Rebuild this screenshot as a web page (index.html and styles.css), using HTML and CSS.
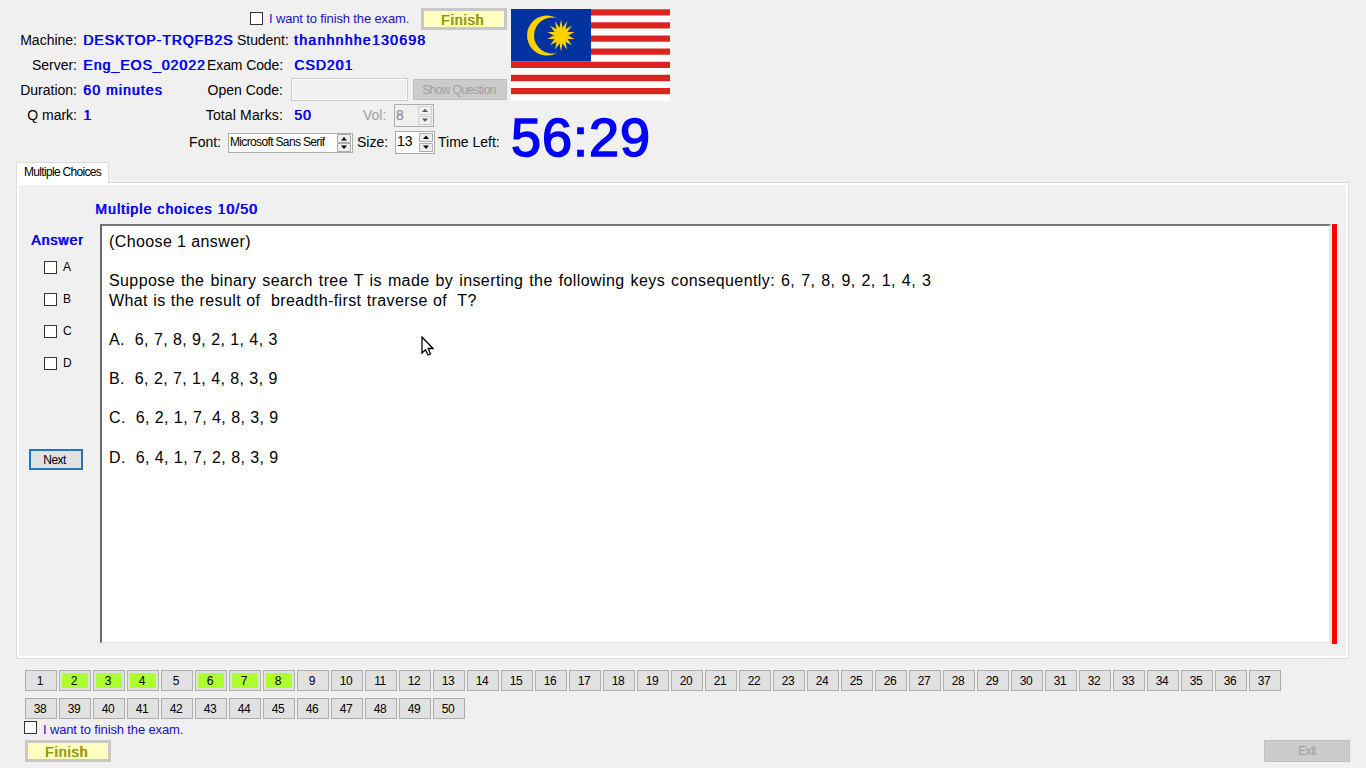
FILE: index.html
```html
<!DOCTYPE html>
<html lang="en">
<head>
<meta charset="utf-8">
<title>Exam</title>
<link rel="stylesheet" href="styles.css">
</head>
<body>
<header class="top">
  <div class="info">
    <div class="row r-finish">
      <span class="box"></span><span class="confirm">I want to finish the exam.</span>
      <button class="finish">Finish</button>
    </div>
    <div class="row first"><span class="c1">Machine:</span><span class="val wide v-machine">DESKTOP-TRQFB2S</span><span class="c2s">Student:</span><span class="val v-student">thanhnhhe130698</span></div>
    <div class="row"><span class="c1">Server:</span><span class="val mid v-server">Eng_EOS_02022</span><span class="c2 code">Exam Code:</span><span class="val v3 v-code">CSD201</span></div>
    <div class="row"><span class="c1">Duration:</span><span class="val mid v-dur">60 minutes</span><span class="c2">Open Code:</span><span class="field"></span><button class="grey show">Show Question</button></div>
    <div class="row"><span class="c1">Q mark:</span><span class="val mid v-mark">1</span><span class="c2 total">Total Marks:</span><span class="val v3 v-total">50</span><span class="vol">Vol:</span>
      <span class="spin off"><span class="num">8</span><svg class="arrows" width="14" height="19" viewBox="0 0 14 19"><path d="M.5.5h13v8H.5zM.5 10.500h13v8H.5z" fill="#f0f0f0" stroke="#d0d0d0"/><path d="M4 6h6L7 2.800zM4 12.500h6L7 15.700z" fill="#555"/></svg></span>
    </div>
    <div class="row r-font"><span class="lbl-font">Font:</span>
      <span class="spin fontbox"><span class="fname">Microsoft Sans Serif</span><svg class="arrows" width="14" height="18" viewBox="0 0 14 18"><path d="M.5.5h13v8H.5zM.5 9.500h13v8H.5z" fill="#eee" stroke="#acacac"/><path d="M4 6.500h6L7 3zM4 11.500h6l-3 3.500z" fill="#000"/></svg></span>
      <span class="lbl-size">Size:</span>
      <span class="spin size"><span class="num">13</span><svg class="arrows" width="14" height="19" viewBox="0 0 14 19"><path d="M.5.5h13v8H.5zM.5 10.500h13v8H.5z" fill="#eee" stroke="#acacac"/><path d="M4 6h6L7 2.500zM4 12.500h6l-3 3.500z" fill="#000"/></svg></span>
      <span class="lbl-time">Time Left:</span>
    </div>
  </div>
  <div class="side">
    <svg class="flag" width="159" height="92" viewBox="0 0 159 92">
      <defs><path id="ray" d="M0-15.800L2-7H-2z"/></defs>
      <rect width="159" height="92" fill="#fff"/>
      <path d="M0 3.290H159M0 16.430H159M0 29.570H159M0 42.710H159M0 55.850H159M0 69H159M0 82.150H159" stroke="#dc241f" stroke-width="6.300"/>
      <rect width="80" height="52.600" fill="#0032a0"/>
      <path d="M46.300 9.300A20 20 0 1 0 46.300 43.700A18 18 0 1 1 46.300 9.300z" fill="#ffd100"/>
      <g transform="translate(50 26.500) scale(.88 1)" fill="#ffd100">
        <circle r="7.800"/>
        <use href="#ray"/><use href="#ray" transform="rotate(25.714)"/><use href="#ray" transform="rotate(51.429)"/><use href="#ray" transform="rotate(77.143)"/><use href="#ray" transform="rotate(102.857)"/><use href="#ray" transform="rotate(128.571)"/><use href="#ray" transform="rotate(154.286)"/><use href="#ray" transform="rotate(180)"/><use href="#ray" transform="rotate(205.714)"/><use href="#ray" transform="rotate(231.429)"/><use href="#ray" transform="rotate(257.143)"/><use href="#ray" transform="rotate(282.857)"/><use href="#ray" transform="rotate(308.571)"/><use href="#ray" transform="rotate(334.286)"/>
      </g>
    </svg>
    <div class="timer">56:29</div>
  </div>
</header>
<div class="tab"><span>Multiple Choices</span></div>
<main class="panel">
  <h1 class="title">Multiple choices 10/50</h1>
  <div class="work">
    <div class="answers">
      <div class="ahead">Answer</div>
      <label class="opt"><span class="box"></span>A</label>
      <label class="opt"><span class="box"></span>B</label>
      <label class="opt"><span class="box"></span>C</label>
      <label class="opt"><span class="box"></span>D</label>
      <button class="next">Next</button>
    </div>
    <div class="paper">
      <p>(Choose 1 answer)</p>
      <p>&nbsp;</p>
      <p class="q2">Suppose the binary search tree T is made by inserting the following keys consequently: 6, 7, 8, 9, 2, 1, 4, 3</p>
      <p class="q3">What is the result of  breadth-first traverse of  T?</p>
      <p>&nbsp;</p>
      <p class="qa">A.  6, 7, 8, 9, 2, 1, 4, 3</p>
      <p>&nbsp;</p>
      <p class="qa">B.  6, 2, 7, 1, 4, 8, 3, 9</p>
      <p>&nbsp;</p>
      <p class="qa">C.  6, 2, 1, 7, 4, 8, 3, 9</p>
      <p>&nbsp;</p>
      <p class="qa">D.  6, 4, 1, 7, 2, 8, 3, 9</p>
    </div>
    <div class="redbar"></div>
  </div>
</main>
<nav class="nums">
<button>1</button><button class="done">2</button><button class="done">3</button><button class="done">4</button><button>5</button><button class="done">6</button><button class="done">7</button><button class="done">8</button><button>9</button><button>10</button><button>11</button><button>12</button><button>13</button><button>14</button><button>15</button><button>16</button><button>17</button><button>18</button><button>19</button><button>20</button><button>21</button><button>22</button><button>23</button><button>24</button><button>25</button><button>26</button><button>27</button><button>28</button><button>29</button><button>30</button><button>31</button><button>32</button><button>33</button><button>34</button><button>35</button><button>36</button><button>37</button><button>38</button><button>39</button><button>40</button><button>41</button><button>42</button><button>43</button><button>44</button><button>45</button><button>46</button><button>47</button><button>48</button><button>49</button><button>50</button>
</nav>
<div class="row r-low"><span class="box"></span><span class="confirm">I want to finish the exam.</span></div>
<footer class="foot"><button class="finish">Finish</button><button class="grey exit">Exit</button></footer>
<svg class="cursor" width="13" height="20" viewBox="0 0 13 20"><path d="M1 1V17L4.500 13.800L7 19L9.500 18L7.200 12.500H12z" fill="#fff" stroke="#000" stroke-width="1.300"/></svg>
</body>
</html>
```
FILE: styles.css
```css
* { box-sizing: border-box; }
body { margin: 0; width: 1366px; height: 768px; overflow: hidden; background: #f0f0f0; font: 14px/16px "Liberation Sans", Arial, sans-serif; color: #000; }
button { margin: 0; padding: 0; font-family: inherit; border-radius: 0; white-space: nowrap; }
.top { display: flex; height: 162px; padding-top: 8px; }
.info { width: 511px; flex: none; }
.row { display: flex; align-items: center; height: 25px; white-space: nowrap; }
.r-finish { height: 20px; padding-left: 250px; }
.first { margin-top: -1px; }
.box { flex: none; width: 13px; height: 13px; border: 1px solid #333; background: #fff; }
.confirm { margin-left: 6px; width: 152px; font-size: 13px; letter-spacing: -.14px; color: #1b10c4; }
.r-finish .confirm { padding-top: 1px; }
/* emboldened regular weight: every glyph is one pixel wider */
.val, .finish, .title, .ahead { font-weight: normal; text-shadow: .8px 0 0 currentColor; letter-spacing: 1px; }
.finish { flex: none; width: 86px; height: 22px; border: 3px solid #c8c8c8; outline: 0; background: #ffffc0; color: #96960a; font-size: 14px; line-height: 16px; padding: 1px 3px 0 0; }
.r-finish .finish { align-self: flex-start; }
.c1 { width: 77px; flex: none; text-align: right; }
.val { color: #0000ee; margin-left: 6px; flex: none; }
.wide { width: 154px; }
.mid { width: 124px; overflow: hidden; }
.v-machine { letter-spacing: .95px; }
.v-student { letter-spacing: 1.3px; margin-left: 5px; }
.v-server { letter-spacing: 1.05px; }
.v-dur { letter-spacing: 1.1px; }
.v3 { width: 68px; margin-left: 11px; }
.c2 { width: 76px; flex: none; text-align: right; }
.code { letter-spacing: -.1px; }
.total { letter-spacing: .15px; margin-left: -2px; width: 78px; }
.c2s { letter-spacing: -.05px; }
.field { width: 117px; height: 23px; margin-left: 8px; border: 1px solid #ccc; box-shadow: inset 0 0 0 1px #fff; }
.grey { border: 1px solid #bfbfbf; background: #ccc; color: #a0a0a0; font-size: 12px; letter-spacing: -.6px; }
.show { width: 94px; height: 21px; margin-left: 5px; padding-right: 2px; }
.vol { color: #a0a0a0; width: 24px; margin-left: 1px; }
.spin { display: flex; align-items: center; justify-content: space-between; border: 1px solid #acacac; background: #fff; padding: 0 1px; flex: none; }
.arrows { flex: none; display: block; }
.spin.off { width: 40px; height: 23px; margin: 2px 0 0 7px; background: #f0f0f0; color: #808080; }
.num { margin-top: -2px; }
.r-font { height: 30px; }
.lbl-font { width: 221px; text-align: right; }
.fontbox { width: 125px; height: 20px; margin: 2px 0 0 7px; }
.fname { font-size: 12px; letter-spacing: -.65px; margin-top: -2px; }
.lbl-size { margin-left: 4px; width: 32px; }
.size { width: 40px; height: 23px; margin-left: 6px; }
.lbl-time { margin-left: 3px; }
.side { padding-top: 1px; }
.flag { display: block; }
.timer { color: #00f; font-size: 54px; line-height: 54px; letter-spacing: 1px; -webkit-text-stroke: 1.600px #00f; margin: 9px 0 0 0; }
.tab { position: relative; margin-left: 16px; width: 93px; height: 21px; border: 1px solid #dcdcdc; border-bottom: 0; background: #fff; padding: 1px 0 0 7px; font-size: 12px; letter-spacing: -.68px; white-space: nowrap; }
.panel { margin-left: 16px; width: 1333px; height: 477px; margin-top: -1px; border: 1px solid #dcdcdc; background: #f0f0f0; box-shadow: inset 0 0 0 2px #fff; overflow: hidden; }
.title { margin: 18px 0 0 78px; font-size: 14px; line-height: 16px; color: #0000ee; letter-spacing: 1.1px; }
.work { display: flex; margin-top: 7px; height: 420px; }
.answers { width: 83px; flex: none; padding-left: 12px; }
.ahead { margin: 8px 0 0 2px; color: #0000ee; }
.opt { display: flex; align-items: center; gap: 6px; height: 32px; padding-left: 15px; font-size: 12px; }
.ahead + .opt { margin-top: 3px; }
.next { width: 54px; height: 21px; margin-top: 70px; border: 2px solid #1a78c2; background: #e1e1e1; font-size: 12px; letter-spacing: -.6px; color: #000; padding-right: 3px; }
.paper { width: 1231px; height: 419px; border: 2px solid #696969; border-top-color: #777; border-right-color: #e3e3e3; border-bottom: 1px solid #e3e3e3; background: #fff; padding: 6px 0 0 7px; font-size: 16px; line-height: 19.600px; letter-spacing: .4px; }
.paper p { margin: 0; white-space: pre; }
.q2 { word-spacing: 1.15px; }
.q3 { word-spacing: .4px; }
.qa { word-spacing: .1px; }
.redbar { width: 5px; height: 420px; margin-left: 1px; background: #f00; }
.nums { display: flex; flex-wrap: wrap; gap: 7px 2px; margin: 11px 0 0 25px; width: 1258px; }
.nums button { width: 32px; height: 21px; border: 1px solid #adadad; background: #e1e1e1; font-size: 12px; letter-spacing: -.4px; color: #000; padding-right: 2px; }
.nums .done { background: #adff2f; box-shadow: inset 0 0 0 2px #e1e1e1; }
.r-low { height: 19px; padding: 0 0 0 24px; }
.r-low .box { margin-top: -2px; }
.r-low .confirm { padding-top: 2px; }
.foot { display: flex; justify-content: space-between; padding: 2px 16px 0 25px; }
.exit { width: 86px; height: 22px; }
.cursor { position: absolute; left: 421px; top: 336px; }
```
